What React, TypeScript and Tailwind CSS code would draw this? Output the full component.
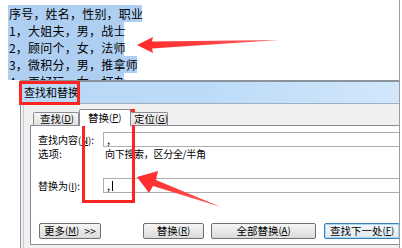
import React from "react";

const lines = [
  { t: "序号，姓名，性别，职业", w: "w-[134px]" },
  { t: "1，大姐夫，男，战士", w: "w-[116px]" },
  { t: "2，顾问个，女，法师", w: "w-[116px]" },
  { t: "3，微积分，男，推拿师", w: "w-[129px]" },
  { t: "4，再好玩，女，打杂", w: "w-[116px]" },
];

function K({ c }: { c: string }) {
  return (
    <span className="text-[9.5px]">
      (<span className="underline">{c}</span>)
    </span>
  );
}

function Btn({ children, w, def }: { children: React.ReactNode; w: string; def?: boolean }) {
  return (
    <div
      className={
        "h-[16px] shrink-0 rounded-[2px] border flex items-center justify-center leading-none whitespace-nowrap " +
        w +
        (def
          ? " border-[#3c7fb1] shadow-[inset_0_0_0_1px_#a9dbf6] bg-gradient-to-b from-[#f4f9fd] to-[#dfe9f1]"
          : " border-[#707070] bg-gradient-to-b from-[#f6f6f6] to-[#dadada]")
      }
    >
      {children}
    </div>
  );
}

export default function App() {
  return (
    <div className="relative w-[402px] h-[248px] overflow-hidden bg-white text-black font-['Noto_Sans_CJK_SC',sans-serif]">
      <div className="w-[400px] h-[248px] border-r border-[#9c9c9c] overflow-hidden flex flex-col">
        {/* document text */}
        <div className="h-[80px] shrink-0 overflow-hidden pt-[5px] pl-[8px] text-[12px] tracking-[0.2px]">
          {lines.map((l) => (
            <div key={l.t} className="h-[17px]">
              <span className={"inline-block h-[17px] leading-[17px] bg-[#afcff2] whitespace-nowrap pl-[1px] " + l.w}>
                {l.t}
              </span>
            </div>
          ))}
        </div>

        {/* dialog */}
        <div className="ml-[20px] flex-1 border-l border-[#8d97a2] flex flex-col text-[10.5px]">
          <div className="h-[24px] shrink-0 border-t-2 border-t-[#8b939c] border-b border-b-[#9fb0c2] bg-gradient-to-r from-[#b8d8f7] via-[#bddbf8] to-[#d2e7fb] pl-[3px] flex items-center text-[11px]">
            查找和替换
          </div>
          <div className="flex-1 bg-[#f0f0f0] pl-[2px] flex">
            <div className="flex-1 border-l border-[#c4cbd3] pl-[6px] pt-[5px] flex flex-col">
              {/* tabs */}
              <div className="relative z-10 h-[17px] -mb-[1px] pl-[3px] flex items-end">
                <div className="w-[46px] h-[13px] mb-[1px] border border-b-0 border-[#898c95] rounded-t-[2px] bg-gradient-to-b from-[#f5f5f5] to-[#e2e2e2] flex items-center pl-[6px] leading-none whitespace-nowrap">
                  查找<K c="D" />
                </div>
                <div className="w-[52px] h-[17px] border border-b-0 border-[#898c95] rounded-t-[2px] bg-white flex items-start pt-[3px] pl-[8px] leading-none whitespace-nowrap">
                  替换<K c="P" />
                </div>
                <div className="w-[37px] h-[13px] mb-[1px] border border-b-0 border-l-0 border-[#898c95] rounded-t-[2px] bg-gradient-to-b from-[#f5f5f5] to-[#e2e2e2] flex items-center pl-[3px] leading-none whitespace-nowrap">
                  定位<K c="G" />
                </div>
              </div>
              {/* panel */}
              <div className="h-[120px] shrink-0 border border-[#898c95] bg-white pl-[7px] pt-[6px] flex flex-col">
                <div className="flex items-center h-[15px]">
                  <span className="w-[65px] shrink-0 whitespace-nowrap text-[10px]">
                    查找内容<K c="N" />:
                  </span>
                  <div className="w-[320px] shrink-0 h-[15px] border border-[#abadb3] pl-[3px] leading-[13px] text-[11px]">
                    ,
                  </div>
                </div>
                <div className="flex items-center h-[13px]">
                  <span className="w-[67px] shrink-0">选项:</span>
                  <span className="whitespace-nowrap text-[10px] tracking-[-0.3px]">向下搜索，区分全/半角</span>
                </div>
                <div className="flex items-center h-[15px] mt-[18px]">
                  <span className="w-[65px] shrink-0 whitespace-nowrap text-[10px]">
                    替换为<K c="I" />:
                  </span>
                  <div className="w-[320px] shrink-0 h-[15px] border border-[#abadb3] pl-[3px] leading-[13px] text-[11px] flex items-center">
                    ,<span className="ml-[2px] inline-block w-[1px] h-[10px] bg-black" />
                  </div>
                </div>
                <div className="flex items-center h-[16px] mt-[30px] pl-[1px]">
                  <Btn w="w-[62px]">
                    更多<K c="M" />
                    <span className="ml-[5px]">&gt;&gt;</span>
                  </Btn>
                  <div className="w-[42px] shrink-0" />
                  <Btn w="w-[61px]">
                    替换<K c="R" />
                  </Btn>
                  <div className="w-[7px] shrink-0" />
                  <Btn w="w-[105px]">
                    全部替换<K c="A" />
                  </Btn>
                  <div className="w-[8px] shrink-0" />
                  <Btn w="w-[76px]" def>
                    查找下一处<K c="F" />
                  </Btn>
                </div>
              </div>
            </div>
          </div>
        </div>
      </div>

      {/* annotations */}
      <div className="absolute left-[19px] top-[81px] w-[61px] h-[24px] border-[3px] border-[#ff2424]" />
      <div className="absolute left-[82px] top-[109px] w-[53px] h-[94px] border-[3px] border-[#ff2424]" />
      <svg className="absolute left-0 top-0 pointer-events-none" width="402" height="248" viewBox="0 0 402 248">
        <defs>
          <linearGradient id="g1" x1="137" y1="0" x2="279" y2="0" gradientUnits="userSpaceOnUse">
            <stop offset="0" stopColor="#ff2a2a" />
            <stop offset="1" stopColor="#ff5a5a" />
          </linearGradient>
          <linearGradient id="g2" x1="137" y1="178" x2="221" y2="207" gradientUnits="userSpaceOnUse">
            <stop offset="0" stopColor="#ff2a2a" />
            <stop offset="1" stopColor="#ff5a5a" />
          </linearGradient>
        </defs>
        <polygon points="137,45 153,37 152,41.5 279,40 152,48.5 153,53" fill="url(#g1)" />
        <polygon points="137,177 158,171 156,180 221,207 153,186 149,193" fill="url(#g2)" />
      </svg>
    </div>
  );
}
